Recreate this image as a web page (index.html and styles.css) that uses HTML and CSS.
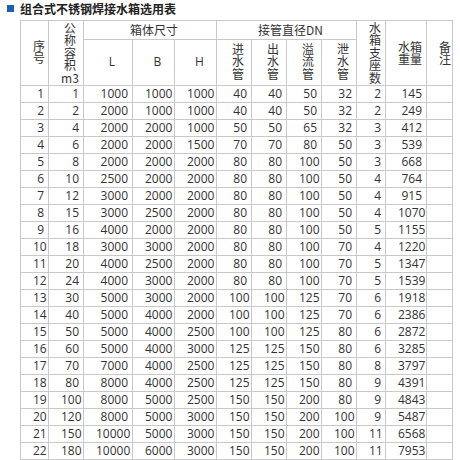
FILE: index.html
```html
<!DOCTYPE html>
<html lang="zh">
<head>
<meta charset="utf-8">
<title>组合式不锈钢焊接水箱选用表</title>
<link rel="stylesheet" href="styles.css">
</head>
<body>
<div class="title"><span class="mark"></span><span class="title-text">组合式不锈钢焊接水箱选用表</span></div>
<table class="spec">
  <colgroup>
    <col class="w28"><col class="w35"><col class="w49"><col class="w42"><col class="w42">
    <col class="w35"><col class="w35"><col class="w35"><col class="w35">
    <col class="w29"><col class="w41"><col class="w26">
  </colgroup>
  <thead>
    <tr class="h1">
      <th rowspan="2">序<br>号</th>
      <th rowspan="2">公<br>称<br>容<br>积<br>m3</th>
      <th colspan="3">箱体尺寸</th>
      <th colspan="4">接管直径DN</th>
      <th rowspan="2">水<br>箱<br>支<br>座<br>数</th>
      <th rowspan="2">水箱<br>重量</th>
      <th rowspan="2">备<br>注</th>
    </tr>
    <tr class="h2">
      <th>L</th><th>B</th><th>H</th>
      <th>进<br>水<br>管</th><th>出<br>水<br>管</th><th>溢<br>流<br>管</th><th>泄<br>水<br>管</th>
    </tr>
  </thead>
  <tbody>
    <tr><td>1</td><td>1</td><td>1000</td><td>1000</td><td>1000</td><td>40</td><td>40</td><td>50</td><td>32</td><td>2</td><td>145</td><td></td></tr>
    <tr><td>2</td><td>2</td><td>2000</td><td>1000</td><td>1000</td><td>40</td><td>40</td><td>50</td><td>32</td><td>2</td><td>249</td><td></td></tr>
    <tr><td>3</td><td>4</td><td>2000</td><td>2000</td><td>1000</td><td>50</td><td>50</td><td>65</td><td>32</td><td>3</td><td>412</td><td></td></tr>
    <tr><td>4</td><td>6</td><td>2000</td><td>2000</td><td>1500</td><td>70</td><td>70</td><td>80</td><td>50</td><td>3</td><td>539</td><td></td></tr>
    <tr><td>5</td><td>8</td><td>2000</td><td>2000</td><td>2000</td><td>80</td><td>80</td><td>100</td><td>50</td><td>3</td><td>668</td><td></td></tr>
    <tr><td>6</td><td>10</td><td>2500</td><td>2000</td><td>2000</td><td>80</td><td>80</td><td>100</td><td>50</td><td>4</td><td>764</td><td></td></tr>
    <tr><td>7</td><td>12</td><td>3000</td><td>2000</td><td>2000</td><td>80</td><td>80</td><td>100</td><td>50</td><td>4</td><td>915</td><td></td></tr>
    <tr><td>8</td><td>15</td><td>3000</td><td>2500</td><td>2000</td><td>80</td><td>80</td><td>100</td><td>50</td><td>4</td><td>1070</td><td></td></tr>
    <tr><td>9</td><td>16</td><td>4000</td><td>2000</td><td>2000</td><td>80</td><td>80</td><td>100</td><td>50</td><td>5</td><td>1155</td><td></td></tr>
    <tr><td>10</td><td>18</td><td>3000</td><td>3000</td><td>2000</td><td>80</td><td>80</td><td>100</td><td>70</td><td>4</td><td>1220</td><td></td></tr>
    <tr><td>11</td><td>20</td><td>4000</td><td>2500</td><td>2000</td><td>80</td><td>80</td><td>100</td><td>70</td><td>5</td><td>1347</td><td></td></tr>
    <tr><td>12</td><td>24</td><td>4000</td><td>3000</td><td>2000</td><td>80</td><td>80</td><td>100</td><td>70</td><td>5</td><td>1539</td><td></td></tr>
    <tr><td>13</td><td>30</td><td>5000</td><td>3000</td><td>2000</td><td>100</td><td>100</td><td>125</td><td>70</td><td>6</td><td>1918</td><td></td></tr>
    <tr><td>14</td><td>40</td><td>5000</td><td>4000</td><td>2000</td><td>100</td><td>100</td><td>125</td><td>70</td><td>6</td><td>2386</td><td></td></tr>
    <tr><td>15</td><td>50</td><td>5000</td><td>4000</td><td>2500</td><td>100</td><td>100</td><td>125</td><td>80</td><td>6</td><td>2872</td><td></td></tr>
    <tr><td>16</td><td>60</td><td>5000</td><td>4000</td><td>3000</td><td>125</td><td>125</td><td>150</td><td>80</td><td>6</td><td>3285</td><td></td></tr>
    <tr><td>17</td><td>70</td><td>7000</td><td>4000</td><td>2500</td><td>125</td><td>125</td><td>150</td><td>80</td><td>8</td><td>3797</td><td></td></tr>
    <tr><td>18</td><td>80</td><td>8000</td><td>4000</td><td>2500</td><td>125</td><td>125</td><td>150</td><td>80</td><td>9</td><td>4391</td><td></td></tr>
    <tr><td>19</td><td>100</td><td>8000</td><td>5000</td><td>2500</td><td>150</td><td>150</td><td>200</td><td>80</td><td>9</td><td>4843</td><td></td></tr>
    <tr><td>20</td><td>120</td><td>8000</td><td>5000</td><td>3000</td><td>150</td><td>150</td><td>200</td><td>100</td><td>9</td><td>5487</td><td></td></tr>
    <tr><td>21</td><td>150</td><td>10000</td><td>5000</td><td>3000</td><td>150</td><td>150</td><td>200</td><td>100</td><td>11</td><td>6568</td><td></td></tr>
    <tr><td>22</td><td>180</td><td>10000</td><td>6000</td><td>3000</td><td>150</td><td>150</td><td>200</td><td>100</td><td>11</td><td>7953</td><td></td></tr>
  </tbody>
</table>
</body>
</html>
```
FILE: styles.css
```css
html, body {
  margin: 0;
  padding: 0;
  background: #fff;
}
body {
  font-family: "Open Sans", "Noto Sans CJK SC", sans-serif;
  font-size: 12px;
  color: #333;
}
.title {
  display: flex;
  align-items: center;
  gap: 6px;
  height: 17px;
  padding-left: 7px;
}
.mark {
  display: block;
  width: 7px;
  height: 7px;
  background: #1a5fb6;
}
.title-text {
  font-family: "Noto Sans CJK SC", sans-serif;
  font-weight: bold;
  font-size: 12px;
  line-height: 17px;
  color: #222;
}
.spec {
  margin: 3px 0 0 20px;
  border-collapse: collapse;
  table-layout: fixed;
  width: 433px;
}
.w28 { width: 28px; }
.w35 { width: 35px; }
.w49 { width: 49px; }
.w42 { width: 42px; }
.w29 { width: 29px; }
.w41 { width: 41px; }
.w26 { width: 26px; }
.spec th, .spec td {
  border: 1px solid #c9c9c9;
  padding: 0 4px 0 12px;
  white-space: nowrap;
  overflow: visible;
}
.spec th {
  font-family: "Noto Sans CJK SC", "Open Sans", sans-serif;
  font-weight: normal;
  font-size: 12px;
  line-height: 12.5px;
  text-align: center;
  vertical-align: middle;
}
.spec th:first-child, .h2 th {
  font-family: "Open Sans", "Noto Sans CJK SC", sans-serif;
}
.h1 th { height: 18px; }
.h2 th { height: 45px; }
.spec td {
  height: 16px;
  line-height: 16px;
  text-align: right;
  vertical-align: middle;
}
```
